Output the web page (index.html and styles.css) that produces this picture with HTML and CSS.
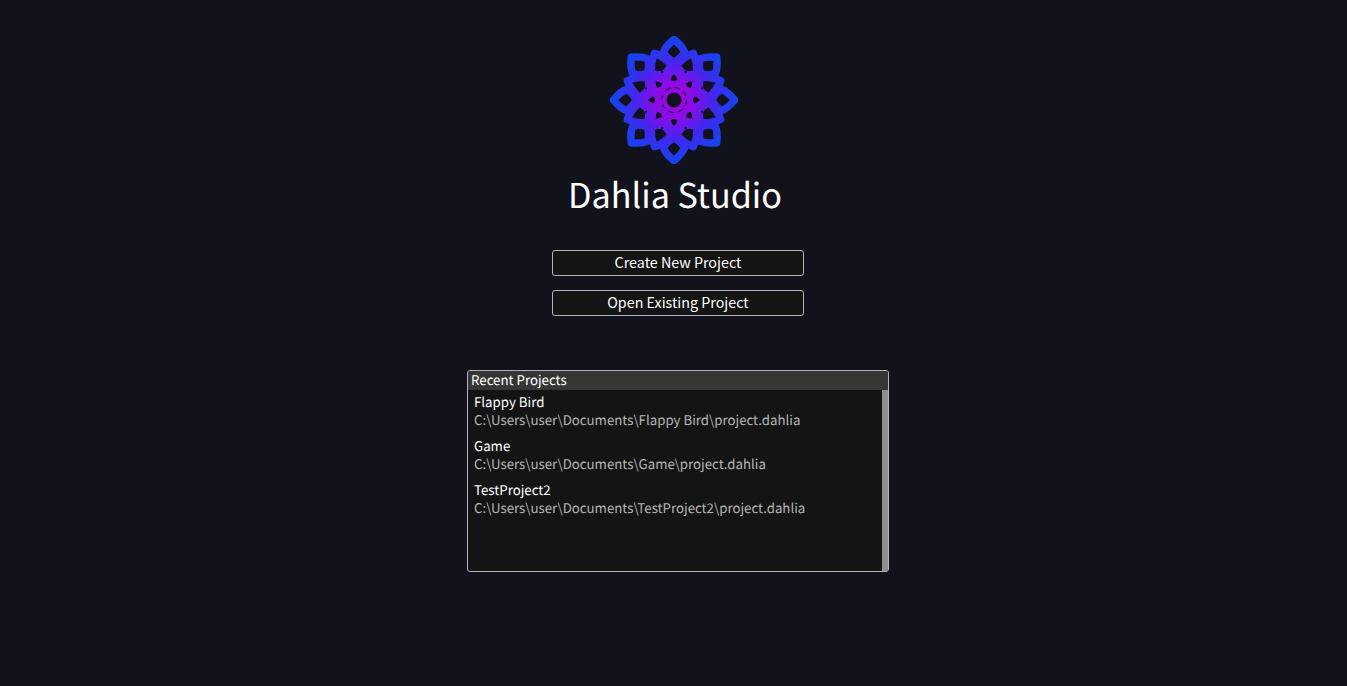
FILE: index.html

```html
<!DOCTYPE html>
<html>
    <head>
        <meta charset="UTF-8">
        <title>Dahlia Studio</title>
        <link rel="stylesheet" href="styles.css">
    </head>
    <body>
        <div class="container">
            <svg class="logo" width="128" height="128" viewBox="-64 -64 128 128">
                <defs>
                    <radialGradient id="grad" gradientUnits="userSpaceOnUse" cx="0" cy="0" r="64">
                        <stop offset="0" stop-color="#a800e8"/>
                        <stop offset="0.3" stop-color="#8a0ce8"/>
                        <stop offset="0.62" stop-color="#4028ee"/>
                        <stop offset="1" stop-color="#1048ee"/>
                    </radialGradient>
                    <path id="big" d="M0 -60.5Q8 -54 10.5 -48Q7 -41 0 -38Q-7 -41 -10.5 -48Q-8 -54 0 -60.5Z"/>
                    <path id="small" d="M0 -50.5Q7 -44 11 -33Q5 -29 0 -27Q-5 -29 -11 -33Q-7 -44 0 -50.5Z"/>
                    <path id="hole" d="M0 -26Q3 -22.5 3.4 -20.5Q2 -19 0 -19Q-2 -19 -3.4 -20.5Q-3 -22.5 0 -26Z"/>
                    <circle id="dot" cx="0" cy="-30.5" r="1.1"/>
                    <g id="ring-big">
                        <use href="#big"/><use href="#big" transform="rotate(45)"/><use href="#big" transform="rotate(90)"/><use href="#big" transform="rotate(135)"/>
                        <use href="#big" transform="rotate(180)"/><use href="#big" transform="rotate(225)"/><use href="#big" transform="rotate(270)"/><use href="#big" transform="rotate(315)"/>
                    </g>
                    <g id="ring-small">
                        <use href="#small"/><use href="#small" transform="rotate(45)"/><use href="#small" transform="rotate(90)"/><use href="#small" transform="rotate(135)"/>
                        <use href="#small" transform="rotate(180)"/><use href="#small" transform="rotate(225)"/><use href="#small" transform="rotate(270)"/><use href="#small" transform="rotate(315)"/>
                    </g>
                    <g id="ring-hole">
                        <use href="#hole"/><use href="#hole" transform="rotate(45)"/><use href="#hole" transform="rotate(90)"/><use href="#hole" transform="rotate(135)"/>
                        <use href="#hole" transform="rotate(180)"/><use href="#hole" transform="rotate(225)"/><use href="#hole" transform="rotate(270)"/><use href="#hole" transform="rotate(315)"/>
                    </g>
                    <g id="ring-dot">
                        <use href="#dot"/><use href="#dot" transform="rotate(45)"/><use href="#dot" transform="rotate(90)"/><use href="#dot" transform="rotate(135)"/>
                        <use href="#dot" transform="rotate(180)"/><use href="#dot" transform="rotate(225)"/><use href="#dot" transform="rotate(270)"/><use href="#dot" transform="rotate(315)"/>
                    </g>
                </defs>
                <g class="petals">
                    <use href="#ring-big"/>
                    <use href="#ring-small" transform="rotate(22.5)"/>
                </g>
                <circle class="core" r="32"/>
                <use class="gap" href="#ring-hole"/>
                <use class="gap" href="#ring-dot" transform="rotate(22.5)"/>
                <circle class="dash" r="12.5"/>
                <circle class="eye" r="7.5"/>
            </svg>
            <h1 class="app-title">Dahlia Studio</h1>
            <div class="content">
                <button class="btn">Create New Project</button>
                <button class="btn">Open Existing Project</button>
                <div class="recent">
                    <div class="recent-head">Recent Projects</div>
                    <div class="recent-body">
                        <div class="recent-list">
                            <div class="project">
                                <div class="project-name">Flappy Bird</div>
                                <div class="project-path">C:\Users\user\Documents\Flappy Bird\project.dahlia</div>
                            </div>
                            <div class="project">
                                <div class="project-name">Game</div>
                                <div class="project-path">C:\Users\user\Documents\Game\project.dahlia</div>
                            </div>
                            <div class="project">
                                <div class="project-name">TestProject2</div>
                                <div class="project-path">C:\Users\user\Documents\TestProject2\project.dahlia</div>
                            </div>
                        </div>
                        <div class="scrollbar"></div>
                    </div>
                </div>
            </div>
        </div>
    </body>
</html>
```

FILE: styles.css

```css
html, body { height: 100%; font-family: "Noto Sans CJK SC", "Noto Sans", sans-serif; text-rendering: geometricPrecision; }
* { margin: 0; padding: 0; box-sizing: border-box; }
body { background: #11121b; color: #fff; overflow: hidden; }
.container { display: flex; flex-direction: column; align-items: center; padding-top: 36px; }

.logo { display: block; margin-left: 1px; }
.petals { fill: none; stroke: url(#grad); stroke-width: 7.5; stroke-linejoin: round; }
.core { fill: url(#grad); }
.gap { fill: #11121b; }
.dash { fill: none; stroke: #11121b; stroke-width: 1.2; stroke-dasharray: 5.5 4.32; }
.eye { fill: #11121b; }

.app-title { font-size: 34.2px; font-weight: 400; line-height: 50px; margin-top: 4px; margin-left: 3px; }

.content { display: flex; flex-direction: column; align-items: center; margin-left: 9px; margin-top: 32px; }
.btn { width: 252px; height: 26px; margin-bottom: 14px; padding-bottom: 2px; background: #141414; border: 1px solid #b4b4b4; border-radius: 3px; color: #fff; font-family: inherit; font-size: 14.3px; line-height: 22px; }

.recent { width: 422px; height: 202px; margin-top: 40px; background: #141414; border: 1px solid #b4b4b4; border-radius: 3px; overflow: hidden; display: flex; flex-direction: column; }
.recent-head { height: 19px; flex: none; background: #363636; padding-left: 3px; font-size: 13.28px; line-height: 18px; }
.recent-body { flex: 1; display: flex; }
.recent-list { flex: 1; padding: 3px 0 0 6px; }
.scrollbar { width: 6px; background: #8f8f8f; }
.project { height: 44px; font-size: 13.28px; line-height: 18px; }
.project-path { color: #b4b4b4; }
```
